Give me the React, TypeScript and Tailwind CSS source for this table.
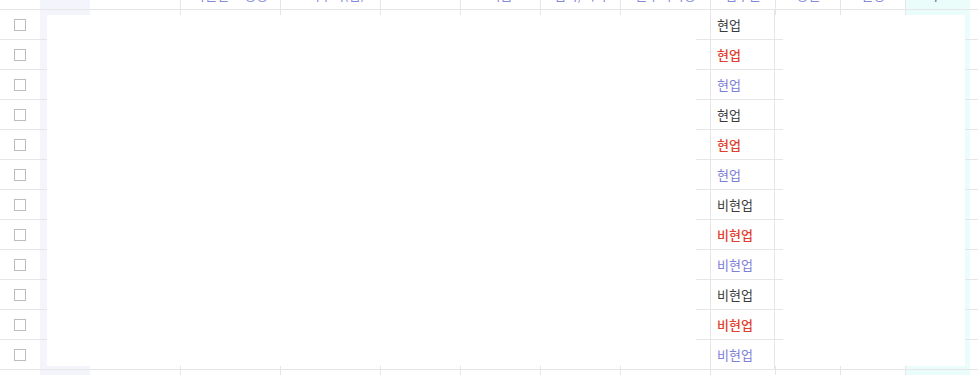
import React from 'react';

// column widths in px, left to right
const COLS = [40, 50, 90, 100, 100, 80, 80, 80, 90, 65, 65, 65, 65, 8];
const WIDTH_CLASS = [
  'w-[40px]', 'w-[50px]', 'w-[90px]', 'w-[100px]', 'w-[100px]', 'w-[80px]', 'w-[80px]',
  'w-[80px]', 'w-[90px]', 'w-[65px]', 'w-[65px]', 'w-[65px]', 'w-[65px]', 'w-[8px]',
];

const HEADERS = ['', '', '', '사원번호 성명', '소속부서(팀)', '', '직급', '입사/퇴사', '근무지역명', '업무군', '성별', '연령', '비고', ''];

const GRADE_IDX = 9;
const LAVENDER_IDX = 1;
const CYAN_IDX = 12;

const TONES = ['text-[#3b3b3b]', 'text-[#e0412f] font-medium', 'text-[#7d80d8]'];

const rows = Array.from({ length: 12 }, (_, i) => ({
  id: i,
  label: i < 6 ? '현업' : '비현업',
  tone: TONES[i % 3],
}));

function cellBg(idx: number) {
  if (idx === LAVENDER_IDX) return 'bg-[#f4f4fc]';
  if (idx === CYAN_IDX) return 'bg-[#ebfdfb]';
  return '';
}

function hasLine(idx: number) {
  return idx >= 3 && idx <= 12;
}

const Checkbox: React.FC = () => (
  <span className="block h-[12px] w-[12px] border border-[#bdbdbd] bg-white" />
);

export default function App() {
  return (
    <div className="relative h-[375px] w-[978px] overflow-hidden bg-white font-['Noto_Sans_CJK_KR','Noto_Sans',sans-serif] text-[13px]">
      {/* header row, mostly scrolled out of view */}
      <div className="flex h-[10px] border-b border-[#e6e6e6]">
        {COLS.map((_, idx) => (
          <div
            key={idx}
            className={`relative shrink-0 overflow-hidden ${WIDTH_CLASS[idx]} ${cellBg(idx)} ${hasLine(idx) ? 'border-l border-[#e6e6e6]' : ''}`}
          >
            <div
              className={`-mt-[12px] whitespace-nowrap text-center leading-[13px] ${idx === CYAN_IDX ? 'text-[#5b6b8a]' : 'text-[#8688dc]'}`}
            >
              {HEADERS[idx]}
            </div>
          </div>
        ))}
      </div>

      {rows.map((row) => (
        <div key={row.id} className="flex h-[30px] border-b border-[#e6e6e6]">
          {COLS.map((_, idx) => {
            if (idx === 0) {
              return (
                <div key={idx} className={`flex shrink-0 items-center justify-center ${WIDTH_CLASS[idx]}`}>
                  <Checkbox />
                </div>
              );
            }
            if (idx === GRADE_IDX) {
              return (
                <div
                  key={idx}
                  className={`relative z-10 flex shrink-0 items-center border-x border-[#e6e6e6] bg-white pl-[6px] ${WIDTH_CLASS[idx]} ${row.tone}`}
                >
                  {row.label}
                  <span className="absolute -bottom-px left-[-15px] right-[-9px] h-px bg-[#e6e6e6]" />
                </div>
              );
            }
            return (
              <div
                key={idx}
                className={`shrink-0 ${WIDTH_CLASS[idx]} ${cellBg(idx)} ${hasLine(idx) ? 'border-l border-[#e6e6e6]' : ''}`}
              />
            );
          })}
        </div>
      ))}

      {/* next row peeking in at the bottom */}
      <div className="flex h-[5px]">
        {COLS.map((_, idx) => (
          <div
            key={idx}
            className={`shrink-0 ${WIDTH_CLASS[idx]} ${cellBg(idx)} ${hasLine(idx) ? 'border-l border-[#e6e6e6]' : ''}`}
          />
        ))}
      </div>

      {/* white panel laid over the grid */}
      <div className="absolute left-[47px] top-[15px] z-[5] h-[351px] w-[918px] bg-white" />
    </div>
  );
}
